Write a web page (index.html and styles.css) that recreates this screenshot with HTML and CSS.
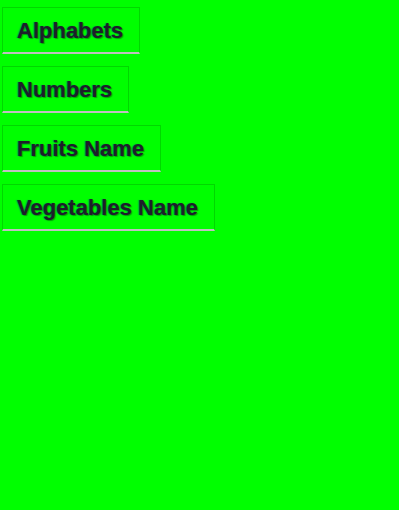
FILE: index.html
```html
<!DOCTYPE html>
<html>
<head>
<meta charset="utf-8">
<link rel="stylesheet" href="styles.css">
</head>
<body>
<div class="menu">
  <button class="item">Alphabets</button>
  <button class="item">Numbers</button>
  <button class="item">Fruits Name</button>
  <button class="item">Vegetables Name</button>
</div>
</body>
</html>
```

FILE: styles.css
```css
html, body {
  margin: 0;
  padding: 0;
  background: #00ff00;
  height: 100%;
}
.menu {
  display: flex;
  flex-direction: column;
  align-items: flex-start;
  gap: 12px;
  padding: 7px 2px;
}
.item {
  font-family: "Liberation Sans", Arial, sans-serif;
  font-size: 22px;
  font-weight: bold;
  line-height: 24px;
  color: #1e1e2a;
  text-shadow: -1px 0 1px rgba(0, 60, 140, 0.55), 1px 1px 1px rgba(0, 0, 0, 0.35);
  background: #00ff00;
  border: 1px solid #00d800;
  border-bottom: 2px solid #c0c0c0;
  padding: 11px 16px 9px 14px;
  margin: 0;
  cursor: pointer;
}
```
